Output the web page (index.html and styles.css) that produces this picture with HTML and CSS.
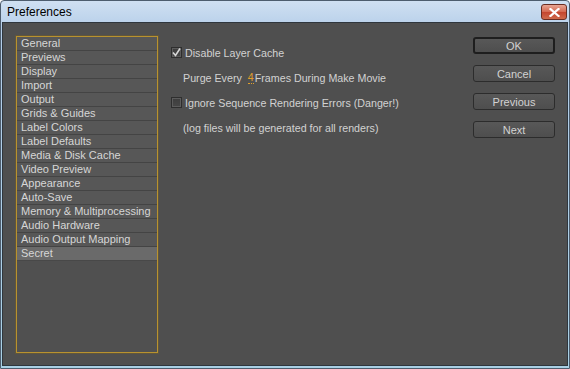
FILE: index.html
```html
<!DOCTYPE html>
<html lang="en">
<head>
    <meta charset="UTF-8">
    <title>Preferences</title>
    <link rel="stylesheet" href="styles.css">
</head>
<body>

<div class="window">
    <div class="titlebar">
        <span class="title">Preferences</span>
        <button class="close" aria-label="Close">
            <svg width="11" height="9" viewBox="0 0 11 9">
                <path d="M1.5 1 L9.5 8 M9.5 1 L1.5 8" stroke="#fff" stroke-width="2.2" stroke-linecap="square"/>
            </svg>
        </button>
    </div>

    <div class="client">
        <ul class="categories">
            <li>General</li>
            <li>Previews</li>
            <li>Display</li>
            <li>Import</li>
            <li>Output</li>
            <li>Grids &amp; Guides</li>
            <li>Label Colors</li>
            <li>Label Defaults</li>
            <li>Media &amp; Disk Cache</li>
            <li>Video Preview</li>
            <li>Appearance</li>
            <li>Auto-Save</li>
            <li>Memory &amp; Multiprocessing</li>
            <li>Audio Hardware</li>
            <li>Audio Output Mapping</li>
            <li class="selected">Secret</li>
        </ul>

        <div class="options">
            <label class="row">
                <span class="check checked">
                    <svg width="9" height="9" viewBox="0 0 9 9">
                        <path d="M1 4.5 L3.5 7.5 L8 0.5" fill="none" stroke="#d6d6d6" stroke-width="1.6"/>
                    </svg>
                </span>
                Disable Layer Cache
            </label>
            <div class="row indent">
                Purge Every <span class="value">4</span>Frames During Make Movie
            </div>
            <label class="row">
                <span class="check"></span>
                Ignore Sequence Rendering Errors (Danger!)
            </label>
            <div class="row indent">
                (log files will be generated for all renders)
            </div>
        </div>

        <div class="actions">
            <button class="btn default">OK</button>
            <button class="btn">Cancel</button>
            <button class="btn">Previous</button>
            <button class="btn">Next</button>
        </div>
    </div>
</div>

</body>
</html>
```

FILE: styles.css
```css
* {
    box-sizing: border-box;
}

body {
    margin: 0;
    font-family: "Liberation Sans", Arial, sans-serif;
    font-size: 11px;
}

.window {
    width: 570px;
    height: 369px;
    display: flex;
    flex-direction: column;
    background: linear-gradient(#cfe0f2, #b4cde8 30px, #a9d0e4);
    border: 1px solid #4d5d6e;
    border-radius: 4px 4px 0 0;
}

/* Title bar */
.titlebar {
    height: 21px;
    flex: none;
    display: flex;
    align-items: center;
    justify-content: space-between;
    padding: 0 2px 0 6px;
}

.title {
    font-size: 12px;
    color: #000;
}

.close {
    width: 26px;
    height: 16px;
    margin-top: 1px;
    padding: 0;
    border: 1px solid #6b2d22;
    border-radius: 3px;
    background: linear-gradient(#e8a593, #d4674f 50%, #c4452e 51%, #cf6a4c);
    display: flex;
    align-items: center;
    justify-content: center;
}

/* Dark client area */
.client {
    flex: 1;
    margin: 0 1px 3px 1px;
    background: #4f4f4f;
    border: 1px solid #2f363d;
    display: flex;
    padding: 13px 12px 12px 13px;
    color: #d2d2d2;
}

.categories {
    list-style: none;
    margin: 0;
    padding: 0;
    width: 142px;
    height: 317px;
    border: 1px solid #b8922f;
    box-shadow: 0 0 0 1px rgba(120, 95, 35, 0.45);
    background: #505050;
}

.categories li {
    height: 14px;
    line-height: 13px;
    padding-left: 4px;
    background: #575757;
    border-bottom: 1px solid #444;
    color: #d6d6d6;
    white-space: nowrap;
}

.categories li.selected {
    background: #6a6a6a;
    border-bottom-color: #484848;
}

/* Options */
.options {
    flex: 1;
    padding: 4px 0 0 13px;
    font-size: 10.7px;
}

.row {
    height: 25px;
    display: flex;
    align-items: center;
    white-space: nowrap;
}

.indent {
    padding-left: 12px;
}

.check {
    width: 11px;
    height: 11px;
    margin-right: 3px;
    border: 1px solid #2e2e2e;
    background: linear-gradient(#3d3d3d, #474747);
    box-shadow: inset 0 0 0 1px #5c5c5c;
    display: flex;
    align-items: center;
    justify-content: center;
}

.value {
    color: #e2a02c;
    margin-left: 6px;
    margin-right: 1px;
    border-bottom: 1px dotted #e2a02c;
    line-height: 11px;
}

/* Buttons */
.actions {
    width: 82px;
    margin-top: 1px;
    display: flex;
    flex-direction: column;
    gap: 11px;
}

.btn {
    height: 17px;
    padding: 0;
    border: 1px solid #2c2c2c;
    border-radius: 3px;
    background: linear-gradient(#585858, #4e4e4e);
    color: #d2d2d2;
    font-family: inherit;
    font-size: 11px;
}

.btn.default {
    border: 2px solid #1e1e1e;
}
```
